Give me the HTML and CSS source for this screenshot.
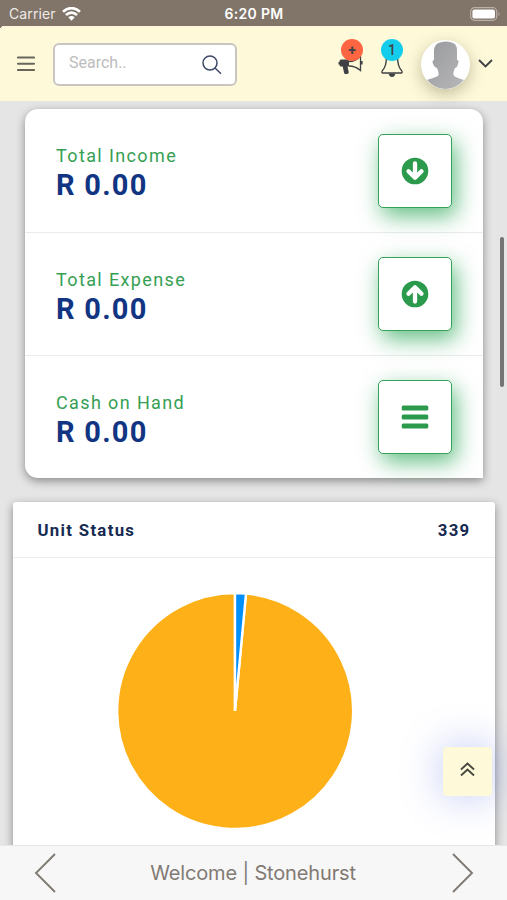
FILE: index.html
```html
<!DOCTYPE html>
<html lang="en">
<head>
<meta charset="utf-8">
<title>Stonehurst</title>
<link rel="stylesheet" href="styles.css">
</head>
<body>
<div class="screen">
  <div class="status">
    <div class="carrier"><span>Carrier</span>
      <svg width="19" height="14" viewBox="0 0 19 14" fill="none" stroke="#fff" stroke-width="2.700"><path d="M1 4.800Q9.500-2.500 18 4.800M4 8.100Q9.500 3.300 15 8.100"/><path d="M6.300 10.300Q9.500 7.600 12.700 10.300L9.500 13.700Z" fill="#fff" stroke="none"/></svg>
    </div>
    <span class="clock">6:20 PM</span>
    <svg class="battery" width="31" height="14" viewBox="0 0 31 14"><rect x=".7" y=".7" width="26" height="12.600" rx="3.800" fill="none" stroke="#b9b1a9" stroke-width="1.200"/><rect x="2.400" y="2.400" width="22.600" height="9.200" rx="2.200" fill="#fff"/><path d="M28.500 4.800q2 2.200 0 4.400z" fill="#b9b1a9"/></svg>
  </div>
  <header class="topbar">
    <svg class="menu" width="18" height="16" viewBox="0 0 18 16" stroke="#66665c" stroke-width="1.900" stroke-linecap="round"><path d="M.9 1.500h16.200M.9 7.700h16.200M.9 14h16.200"/></svg>
    <div class="search"><span>Search..</span>
      <svg width="20" height="20" viewBox="0 0 20 20" fill="none" stroke="#3d4866" stroke-width="1.500"><circle cx="8" cy="8" r="7"/><path d="M13 13l6 5.700"/></svg>
    </div>
    <div class="notice horn">
      <svg width="26" height="20" viewBox="0 0 26 20" fill="none" stroke="#404145"><path d="M11 5.500C16 5.500 20 3 22.500 0V14.500C19 11.500 15 10 11 10" stroke-width="1.300"/><path d="M23.700 5v3.500" stroke-width="1.800"/><path d="M3.200 3.500H9.500Q11 3.500 11 5V10.500H9.500L10.700 16Q11 18 9 18H7.500Q6.200 18 6 16.500L4.700 10.500H3.200Q1.500 10.500 1.500 9V8.500H.5V6h1V5Q1.500 3.500 3.200 3.500Z" fill="#404145" stroke="none"/></svg>
      <span class="badge red">+</span>
    </div>
    <div class="notice bell">
      <svg width="24" height="28" viewBox="0 0 24 28" fill="none" stroke="#404145" stroke-width="1.400"><path d="M6.500 6C6.500 13 6 17 2.500 20.500Q1 23 3 23H21Q23 23 21.500 20.500C18 17 17.500 13 17.500 6"/><path d="M8.500 23.500h7q-1 3.500-3.500 3.500T8.500 23.500z" fill="#404145" stroke="none"/></svg>
      <span class="badge cyan">1</span>
    </div>
    <div class="avatar">
      <svg width="49" height="49" viewBox="0 0 49 49"><defs><linearGradient id="person" x1="0" y1="0" x2="1" y2="1"><stop offset="0" stop-color="#999a9d"/><stop offset="1" stop-color="#b7b7b9"/></linearGradient></defs><path fill="url(#person)" d="M6 40Q14 37.500 17 36Q18.500 34 16 28Q12.500 27 11.500 22Q11.500 20 13 20V11Q13 4 19 2.500Q25 1 29 2Q36 3 36 10V20Q38.500 20 37 24Q36 28 34 28Q31.500 33 33 36Q36 38 43 40Q35 49 24.500 49T6 40Z"/></svg>
    </div>
    <svg class="caret" width="15" height="9" viewBox="0 0 15 9" fill="none" stroke="#404145" stroke-width="1.900"><path d="M1 1l6.500 6.500L14 1"/></svg>
  </header>
  <main class="content">
    <section class="card totals">
      <div class="row">
        <div class="figures"><div class="label">Total Income</div><div class="amount">R 0.00</div></div>
        <div class="tile"><svg width="28" height="28" viewBox="0 0 28 28"><circle cx="14" cy="14" r="13.300" fill="#2b9a4c"/><path d="M14 6.500v14M7.500 14.200l6.500 6.500 6.500-6.500" fill="none" stroke="#fff" stroke-width="4.300" stroke-linecap="round" stroke-linejoin="round"/></svg></div>
      </div>
      <div class="row">
        <div class="figures"><div class="label">Total Expense</div><div class="amount">R 0.00</div></div>
        <div class="tile"><svg width="28" height="28" viewBox="0 0 28 28"><circle cx="14" cy="14" r="13.300" fill="#2b9a4c"/><path d="M14 21.500v-14M7.500 13.800l6.500-6.500 6.500 6.500" fill="none" stroke="#fff" stroke-width="4.300" stroke-linecap="round" stroke-linejoin="round"/></svg></div>
      </div>
      <div class="row">
        <div class="figures"><div class="label">Cash on Hand</div><div class="amount">R 0.00</div></div>
        <div class="tile"><svg width="28" height="28" viewBox="0 0 28 28" fill="#2b9a4c"><rect x=".7" y="2.500" width="26.600" height="5" rx="1.500"/><rect x=".7" y="11.500" width="26.600" height="5" rx="1.500"/><rect x=".7" y="20.500" width="26.600" height="5" rx="1.500"/></svg></div>
      </div>
    </section>
    <section class="card units">
      <div class="units-head"><span>Unit Status</span><span>339</span></div>
      <svg class="pie" width="238" height="238" viewBox="-119 -119 238 238" stroke="#fff" stroke-width="2.400"><path fill="#feb019" d="M0 0L11-117.500A118 118 0 1 1 0-118Z"/><path fill="#008ffb" d="M0 0V-118A118 118 0 0 1 11-117.500Z"/></svg>
    </section>
    <div class="scrollbar"></div>
    <div class="to-top"><svg width="15" height="15" viewBox="0 0 15 15" fill="none" stroke="#464640" stroke-width="1.800"><path d="M1 7.500l6.500-6 6.500 6M1 13.500l6.500-6 6.500 6"/></svg></div>
  </main>
  <footer class="toolbar">
    <svg width="22" height="40" viewBox="0 0 22 40" fill="none" stroke="#817a74" stroke-width="1.900"><path d="M21 1L2 20l19 19"/></svg>
    <span>Welcome | Stonehurst</span>
    <svg width="22" height="40" viewBox="0 0 22 40" fill="none" stroke="#817a74" stroke-width="1.900"><path d="M1 1l19 19L1 39"/></svg>
  </footer>
</div>
</body>
</html>
```
FILE: styles.css
```css
* { box-sizing: border-box; }
body { margin: 0; font-family: Roboto, sans-serif; }
svg { display: block; flex: none; }
.screen { width: 507px; height: 900px; display: flex; flex-direction: column; overflow: hidden; background: #e5e5e5; }
.status { height: 26px; flex: none; display: grid; grid-template-columns: 1fr auto 1fr; align-items: center; padding: 1px 6px 0 9px; background: #817469; color: #fff; font-family: Inter, sans-serif; font-size: 14px; }
.carrier { display: flex; align-items: center; gap: 6px; color: #eeeae6; letter-spacing: .1px; }
.clock { font-weight: 600; font-size: 14px; letter-spacing: .3px; margin-right: 2px; }
.battery { justify-self: end; }
.topbar { height: 75px; flex: none; display: flex; align-items: center; padding: 1px 14px 0 17px; background: linear-gradient(135deg, #817469 0 2px, #fefad9 2px); }
.menu { margin-right: 18px; }
.search { width: 184px; height: 43px; margin-top: 1px; padding: 0 13px 0 14px; display: flex; align-items: center; justify-content: space-between; background: #fff; border: 2px solid #c8c5c3; border-radius: 6px; color: #bcbcbc; font-size: 16px; }
.search span { margin-top: -4px; }
.notice { position: relative; }
.horn { margin: 4px 0 0 101px; }
.bell { margin: 0 0 0 16px; }
.badge { position: absolute; width: 22px; height: 22px; border-radius: 50%; text-align: center; line-height: 22px; font-size: 14px; color: #404145; }
.red { background: #fe6542; left: 3px; top: -17px; font-weight: 700; }
.cyan { background: #14cdec; left: 1px; top: -11px; font-weight: 500; }
.avatar { width: 49px; height: 49px; margin: 0 8px 0 17px; border-radius: 50%; overflow: hidden; background: #fff; box-shadow: 0 5px 16px rgba(100, 95, 65, .4); }
.caret { margin-top: -2px; }
.content { position: relative; flex: 1; min-height: 0; padding-top: 8px; overflow: hidden; }
.card { background: #fff; box-shadow: 0 3px 10px rgba(0, 0, 0, .4); }
.totals { width: 458px; margin-left: 25px; border-radius: 13px 13px 0 13px; }
.row { height: 123px; padding: 0 31px; display: flex; align-items: center; justify-content: space-between; }
.row + .row { border-top: 1px solid #ebebeb; }
.figures { padding-top: 5px; }
.label { color: #35a053; font-size: 18px; line-height: 24px; letter-spacing: 1.380px; }
.amount { color: #123583; font-size: 29px; line-height: 34px; font-weight: 700; letter-spacing: 1.250px; }
.tile { width: 74px; height: 74px; display: flex; align-items: center; justify-content: center; background: #fff; border: 1.500px solid #35a25a; border-radius: 5px; box-shadow: 4px 8px 22px rgba(40, 165, 85, .72); }
.units { width: 482px; height: 400px; margin: 24px 0 0 13px; border-radius: 3px; }
.units-head { height: 56px; padding: 0 24.500px; border-bottom: 1px solid #ececec; display: flex; align-items: center; justify-content: space-between; color: #172a52; font-size: 16.800px; font-weight: 700; letter-spacing: 1.300px; }
.pie { margin: 34px 0 0 102.500px; }
.scrollbar { position: absolute; right: 3px; top: 136px; width: 4px; height: 150px; border-radius: 2px; background: #747474; }
.to-top { position: absolute; left: 443px; top: 646px; width: 49px; height: 49px; padding-bottom: 4px; border-radius: 4px; background: #fefad9; display: flex; align-items: center; justify-content: center; box-shadow: 0 0 40px rgba(85, 105, 225, .38); }
.toolbar { height: 55px; flex: none; padding: 0 33px 0 34px; display: flex; align-items: center; justify-content: space-between; background: #f7f7f7; border-top: 1px solid #e7e7e7; color: #817a74; font-family: Inter, sans-serif; font-size: 20px; letter-spacing: -.15px; }
.toolbar span { margin-right: 2px; }
```
